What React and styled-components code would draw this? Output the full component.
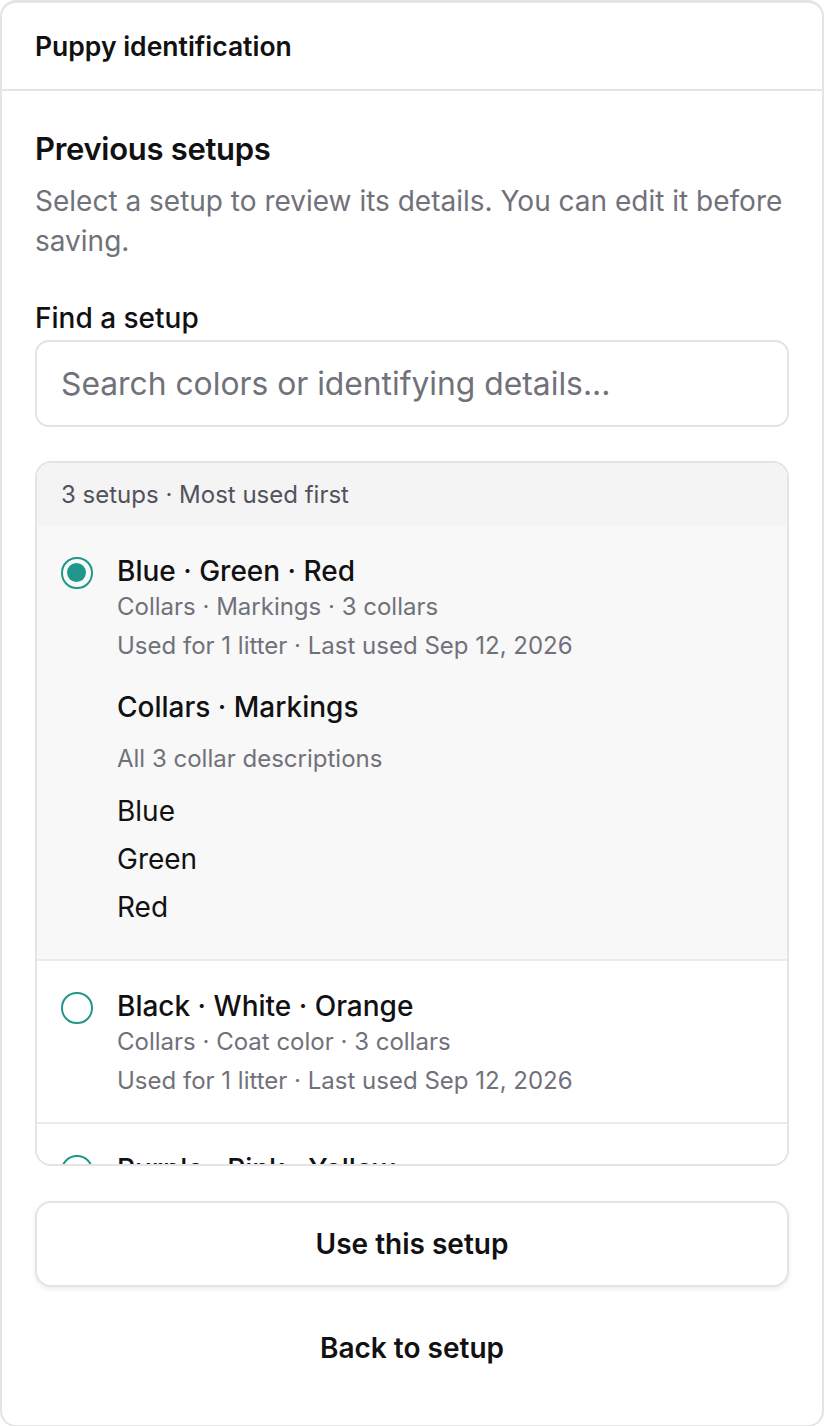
import React, { useState } from 'react';
import styled, { createGlobalStyle } from 'styled-components';

const GlobalStyle = createGlobalStyle`
  html, body {
    margin: 0;
    padding: 0;
    background: #fff;
  }
  body {
    font-family: Inter, "Noto Sans", "Liberation Sans", sans-serif;
    color: #111113;
    -webkit-font-smoothing: antialiased;
  }
  * { box-sizing: border-box; }
`;

const setups = [
  {
    id: 'bgr',
    title: 'Blue · Green · Red',
    meta: 'Collars · Markings · 3 collars',
    used: 'Used for 1 litter · Last used Sep 12, 2026',
    kind: 'Collars · Markings',
    collars: ['Blue', 'Green', 'Red'],
  },
  {
    id: 'bwo',
    title: 'Black · White · Orange',
    meta: 'Collars · Coat color · 3 collars',
    used: 'Used for 1 litter · Last used Sep 12, 2026',
    kind: 'Collars · Coat color',
    collars: ['Black', 'White', 'Orange'],
  },
  {
    id: 'ppy',
    title: 'Purple · Pink · Yellow',
    meta: 'Collars · Markings · 3 collars',
    used: 'Used for 1 litter · Last used Aug 30, 2026',
    kind: 'Collars · Markings',
    collars: ['Purple', 'Pink', 'Yellow'],
  },
];

const Card = styled.div`
  width: 824px;
  border: 2px solid #e4e4e7;
  border-top-width: 3px;
  border-radius: 16px;
  background: #fff;
  overflow: hidden;
`;

const Header = styled.header`
  height: 88px;
  display: flex;
  align-items: center;
  padding: 0 33px;
  border-bottom: 2px solid #e4e4e7;
  font-size: 26.5px;
  font-weight: 600;
`;

const Body = styled.div`
  display: flex;
  flex-direction: column;
  padding: 38px 33px 34px;
`;

const Title = styled.h2`
  margin: 0;
  font-size: 31px;
  line-height: 40px;
  font-weight: 600;
  letter-spacing: -0.3px;
`;

const Description = styled.p`
  margin: 12px 0 0;
  font-size: 28px;
  line-height: 40px;
  color: #71717a;
`;

const Label = styled.label`
  margin-top: 40px;
  font-size: 28px;
  line-height: 34px;
  font-weight: 500;
`;

const SearchInput = styled.input`
  margin-top: 5px;
  height: 87px;
  width: 100%;
  border: 2px solid #e4e4e7;
  border-radius: 14px;
  padding: 0 24px;
  font-family: inherit;
  font-size: 31.8px;
  color: #111113;
  background: #fff;
  outline: none;

  &::placeholder {
    color: #71717a;
  }
`;

const List = styled.div`
  margin-top: 34px;
  height: 705px;
  border: 2px solid #e4e4e7;
  border-radius: 16px;
  display: flex;
  flex-direction: column;
  overflow: hidden;
`;

const ListHeader = styled.div`
  height: 63px;
  flex-shrink: 0;
  display: flex;
  align-items: center;
  padding: 0 24px;
  background: #f4f4f5;
  font-size: 24px;
  color: #52525b;
`;

const ListScroll = styled.div`
  flex: 1;
  overflow-y: auto;
  scrollbar-width: none;
  &::-webkit-scrollbar { display: none; }
`;

const Item = styled.div`
  display: flex;
  gap: 24.5px;
  padding: 28px 24px 24px;
  background: ${({ $selected }) => ($selected ? '#f8f8f8' : '#fff')};
  border-bottom: 2px solid #ebebed;
  cursor: pointer;
`;

const Radio = styled.span`
  flex-shrink: 0;
  width: 31.5px;
  height: 31.5px;
  margin-top: 3px;
  border-radius: 50%;
  border: 2.5px solid #1f978a;
  display: flex;
  align-items: center;
  justify-content: center;

  &::after {
    content: '';
    width: 19px;
    height: 19px;
    border-radius: 50%;
    background: ${({ $checked }) => ($checked ? '#1f978a' : 'transparent')};
  }
`;

const ItemText = styled.div`
  display: flex;
  flex-direction: column;
  min-width: 0;
`;

const ItemTitle = styled.div`
  font-size: 28px;
  line-height: 34px;
  font-weight: 500;
`;

const Meta = styled.div`
  font-size: 24px;
  line-height: 35px;
  color: #71717a;
  margin-top: ${({ $gap }) => $gap || 0}px;
`;

const Details = styled.div`
  display: flex;
  flex-direction: column;
  margin-top: 27px;
  padding-bottom: 11px;
`;

const DetailKind = styled.div`
  font-size: 28px;
  line-height: 34px;
  font-weight: 500;
`;

const DetailNote = styled(Meta)`
  margin-top: 16.5px;
`;

const CollarList = styled.ul`
  list-style: none;
  margin: 18.5px 0 0;
  padding: 0;
  display: flex;
  flex-direction: column;
  gap: 14px;
`;

const Collar = styled.li`
  font-size: 28px;
  line-height: 34px;
`;

const Button = styled.button`
  height: 86px;
  width: 100%;
  border-radius: 16px;
  font-family: inherit;
  font-size: 28px;
  font-weight: 600;
  color: #111113;
  cursor: pointer;
  border: ${({ $ghost }) => ($ghost ? 'none' : '2px solid #e4e4e7')};
  background: ${({ $ghost }) => ($ghost ? 'transparent' : '#fff')};
  box-shadow: ${({ $ghost }) => ($ghost ? 'none' : '0 2px 5px rgba(0, 0, 0, 0.08)')};
  margin-top: ${({ $ghost }) => ($ghost ? '17.5px' : '35px')};
`;

const App = () => {
  const [selected, setSelected] = useState('bgr');

  return (
    <>
      <GlobalStyle />
      <Card>
        <Header>Puppy identification</Header>
        <Body>
          <Title>Previous setups</Title>
          <Description>
            Select a setup to review its details. You can edit it before saving.
          </Description>
          <Label htmlFor="setup-search">Find a setup</Label>
          <SearchInput id="setup-search" placeholder="Search colors or identifying details..." />
          <List>
            <ListHeader>{setups.length} setups · Most used first</ListHeader>
            <ListScroll>
              {setups.map((s) => {
                const isSel = s.id === selected;
                return (
                  <Item key={s.id} $selected={isSel} onClick={() => setSelected(s.id)}>
                    <Radio $checked={isSel} />
                    <ItemText>
                      <ItemTitle>{s.title}</ItemTitle>
                      <Meta $gap={1}>{s.meta}</Meta>
                      <Meta $gap={4}>{s.used}</Meta>
                      {isSel && (
                        <Details>
                          <DetailKind>{s.kind}</DetailKind>
                          <DetailNote>All {s.collars.length} collar descriptions</DetailNote>
                          <CollarList>
                            {s.collars.map((c) => (
                              <Collar key={c}>{c}</Collar>
                            ))}
                          </CollarList>
                        </Details>
                      )}
                    </ItemText>
                  </Item>
                );
              })}
            </ListScroll>
          </List>
          <Button>Use this setup</Button>
          <Button $ghost>Back to setup</Button>
        </Body>
      </Card>
    </>
  );
};

export default App;
